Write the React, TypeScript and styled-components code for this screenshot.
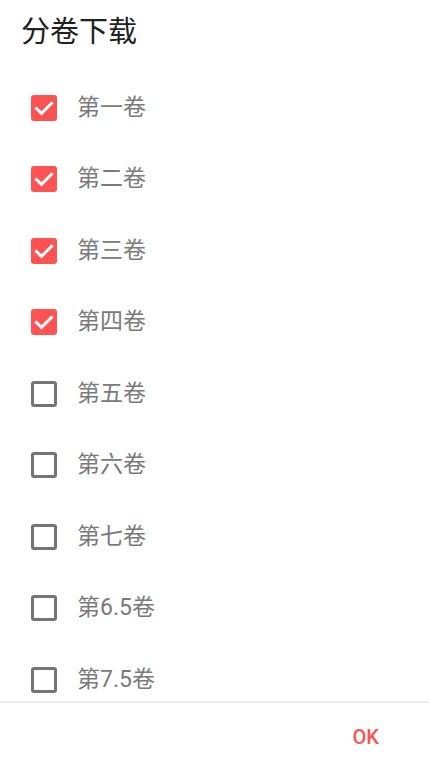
import React, { useState } from "react";
import styled, { createGlobalStyle } from "styled-components";

const Global = createGlobalStyle`
  html, body { margin: 0; padding: 0; background: #ffffff; }
  body { font-family: Roboto, "Noto Sans CJK SC", sans-serif; overflow: hidden; }
`;

const Dialog = styled.div`
  width: 429px;
  height: 759px;
  display: flex;
  flex-direction: column;
  background: #ffffff;
  overflow: hidden;
`;

const Title = styled.h1`
  margin: 0;
  height: 72px;
  box-sizing: border-box;
  padding: 12px 0 0 21px;
  font-size: 29px;
  line-height: 40px;
  font-weight: 400;
  color: #212121;
  flex-shrink: 0;
`;

const List = styled.div`
  height: 629px;
  flex-shrink: 0;
  overflow: hidden;
`;

const Row = styled.label`
  height: 71.5px;
  display: flex;
  align-items: center;
  padding-left: 31px;
  gap: 20px;
  cursor: pointer;
`;

const Box = styled.span<{ $checked: boolean }>`
  width: 26px;
  height: 26px;
  box-sizing: border-box;
  border-radius: 3px;
  flex-shrink: 0;
  display: flex;
  align-items: center;
  justify-content: center;
  background: ${(p) => (p.$checked ? "#ff5252" : "transparent")};
  border: ${(p) => (p.$checked ? "none" : "3px solid #757575")};
`;

const Label = styled.span`
  font-size: 23px;
  line-height: 30px;
  color: #7a7a7a;
`;

const Divider = styled.div`
  height: 2px;
  background: #eeeeee;
  flex-shrink: 0;
`;

const Footer = styled.div`
  display: flex;
  justify-content: flex-end;
  padding: 22px 50px 0 0;
`;

const OkButton = styled.button`
  border: none;
  background: transparent;
  padding: 0;
  font-family: Roboto, sans-serif;
  font-weight: 500;
  font-size: 20px;
  line-height: 24px;
  color: #ff5252;
  cursor: pointer;
`;

const volumes = [
  { name: "第一卷", checked: true },
  { name: "第二卷", checked: true },
  { name: "第三卷", checked: true },
  { name: "第四卷", checked: true },
  { name: "第五卷", checked: false },
  { name: "第六卷", checked: false },
  { name: "第七卷", checked: false },
  { name: "第6.5卷", checked: false },
  { name: "第7.5卷", checked: false },
];

const Check = () => (
  <svg width="26" height="26" viewBox="0 0 26 26">
    <path d="M5.5 13.5 L10.5 18.3 L20.5 8.3" fill="none" stroke="#ffffff" strokeWidth="3" strokeLinecap="square" />
  </svg>
);

export default function App() {
  const [items, setItems] = useState(volumes);
  return (
    <Dialog>
      <Global />
      <Title>分卷下载</Title>
      <List>
        {items.map((v, i) => (
          <Row
            key={v.name}
            onClick={() =>
              setItems((s) => s.map((x, j) => (j === i ? { ...x, checked: !x.checked } : x)))
            }
          >
            <Box $checked={v.checked}>{v.checked && <Check />}</Box>
            <Label>{v.name}</Label>
          </Row>
        ))}
      </List>
      <Divider />
      <Footer>
        <OkButton>OK</OkButton>
      </Footer>
    </Dialog>
  );
}
